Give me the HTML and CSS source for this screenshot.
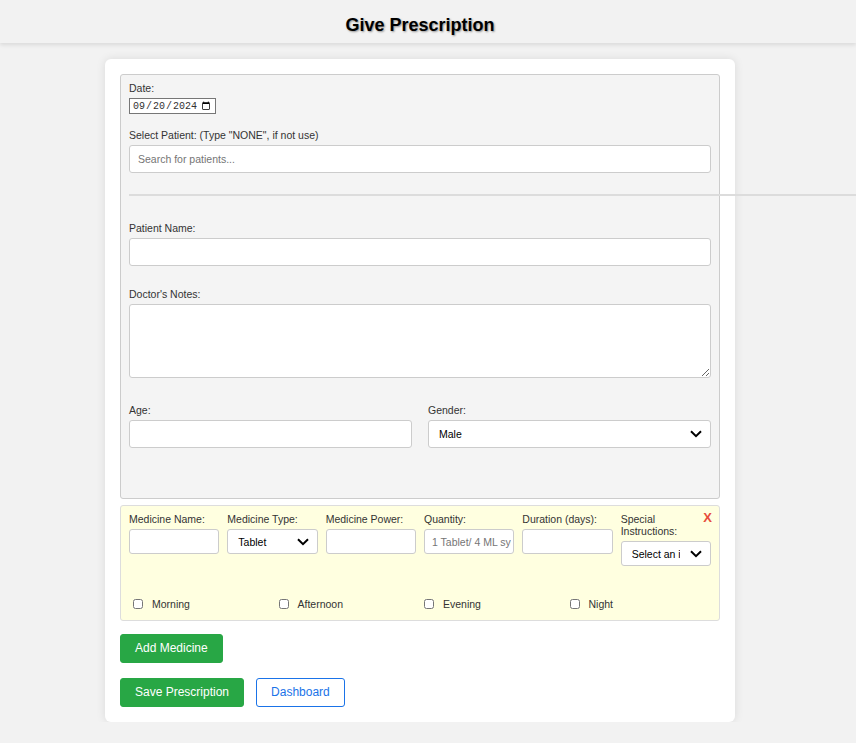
FILE: index.html
```html
<!DOCTYPE html>
<html lang="en">
<head>
<meta charset="utf-8">
<title>Give Prescription</title>
<link rel="stylesheet" href="styles.css">
</head>
<body>
<header class="topbar">
  <h1 class="title">Give Prescription</h1>
</header>
<div class="page">
  <form class="card">
    <div class="patient-box">
      <div class="field">
        <label class="lbl" for="date">Date:</label>
        <input class="date-input" id="date" type="date" value="2024-09-20">
      </div>
      <div class="field field-search">
        <label class="lbl" for="search">Select Patient: (Type "NONE", if not use)</label>
        <input class="text-input" id="search" type="text" placeholder="Search for patients...">
      </div>
      <hr class="divider">
      <div class="field field-wide">
        <label class="lbl" for="pname">Patient Name:</label>
        <input class="text-input" id="pname" type="text">
      </div>
      <div class="field field-notes">
        <label class="lbl" for="notes">Doctor's Notes:</label>
        <textarea class="text-area" id="notes"></textarea>
      </div>
      <div class="two-col">
        <div class="col">
          <label class="lbl" for="age">Age:</label>
          <input class="text-input" id="age" type="text">
        </div>
        <div class="col">
          <label class="lbl" for="gender">Gender:</label>
          <select class="text-input select-input" id="gender">
            <option>Male</option>
            <option>Female</option>
          </select>
        </div>
      </div>
    </div>

    <div class="med-box">
      <span class="remove">X</span>
      <div class="med-row">
        <div class="med-col">
          <label class="lbl">Medicine Name:</label>
          <input class="med-input" type="text">
        </div>
        <div class="med-col">
          <label class="lbl">Medicine Type:</label>
          <select class="med-input select-input">
            <option>Tablet</option>
            <option>Syrup</option>
          </select>
        </div>
        <div class="med-col">
          <label class="lbl">Medicine Power:</label>
          <input class="med-input" type="text">
        </div>
        <div class="med-col">
          <label class="lbl">Quantity:</label>
          <input class="med-input qty-input" type="text" placeholder="1 Tablet/ 4 ML syrup">
        </div>
        <div class="med-col">
          <label class="lbl">Duration (days):</label>
          <input class="med-input" type="text">
        </div>
        <div class="med-col">
          <label class="lbl">Special Instructions:</label>
          <select class="med-input select-input">
            <option>Select an instruction</option>
          </select>
        </div>
      </div>
      <div class="checks">
        <label class="check"><input type="checkbox">Morning</label>
        <label class="check"><input type="checkbox">Afternoon</label>
        <label class="check"><input type="checkbox">Evening</label>
        <label class="check"><input type="checkbox">Night</label>
      </div>
    </div>

    <div class="actions">
      <button type="button" class="btn btn-green">Add Medicine</button>
    </div>
    <div class="actions actions-bottom">
      <button type="button" class="btn btn-green">Save Prescription</button>
      <button type="button" class="btn btn-outline">Dashboard</button>
    </div>
  </form>
</div>
</body>
</html>
```

FILE: styles.css
```css
* {
  box-sizing: border-box;
}

html,
body {
  margin: 0;
  padding: 0;
}

body {
  background: #f2f2f2;
  font-family: "Liberation Sans", Arial, sans-serif;
  color: #333;
  overflow: hidden;
}

.topbar {
  background: #f2f2f2;
  box-shadow: 0 2px 4px rgba(0, 0, 0, 0.1);
  padding: 15px 0 7px;
}

.title {
  width: 840px;
  margin: 0;
  text-align: center;
  font-size: 18px;
  line-height: 21px;
  font-weight: bold;
  color: #000;
  text-shadow: 1px 1px 2px rgba(0, 0, 0, 0.4);
}

.page {
  width: 840px;
}

.card {
  width: 630px;
  margin: 16px auto 0;
  background: #fff;
  border-radius: 6px;
  box-shadow: 0 0 10px rgba(0, 0, 0, 0.1);
  padding: 15px;
}

.patient-box {
  background: #f4f4f4;
  border: 1px solid #ccc;
  border-radius: 3px;
  padding: 7px 8px 8px;
  margin-bottom: 6px;
}

.field {
  margin-bottom: 15px;
}

.field-search {
  margin-bottom: 14px;
}

.field-wide {
  margin-bottom: 22px;
}

.field-notes {
  margin-bottom: 26px;
}

.lbl {
  display: block;
  font-size: 10.5px;
  line-height: 12px;
  margin-bottom: 4px;
  color: #333;
}

.date-input {
  display: block;
  width: 87px;
  height: 16px;
  padding: 0 2px;
  border: 1px solid #767676;
  border-radius: 0;
  background: #fff;
  font: 10px "Liberation Mono", monospace;
  color: #333;
}

.text-input {
  display: block;
  width: 100%;
  height: 28px;
  border: 1px solid #ccc;
  border-radius: 3px;
  background-color: #fff;
  font: 10.5px "Liberation Sans", Arial, sans-serif;
  color: #000;
  padding: 0 8px;
  margin: 0;
}

.text-input::placeholder,
.med-input::placeholder {
  color: #757575;
}

.divider {
  width: 727px;
  height: 0;
  margin: 21px 0 26px;
  border: 0;
  border-top: 2px solid #dcdcdc;
}

.text-area {
  display: block;
  width: 100%;
  height: 74px;
  border: 1px solid #ccc;
  border-radius: 3px;
  background: #fff;
  margin: 0;
  padding: 6px 8px;
  font: 10.5px "Liberation Sans", Arial, sans-serif;
  resize: vertical;
}

.two-col {
  display: grid;
  grid-template-columns: 1fr 1fr;
  column-gap: 16px;
  margin-bottom: 42px;
}

.med-box {
  position: relative;
  background: #ffffe0;
  border: 1px solid #ddd;
  border-radius: 3px;
  padding: 7px 8px 8px;
}

.remove {
  position: absolute;
  top: 4px;
  right: 7px;
  font-size: 13px;
  line-height: 16px;
  font-weight: bold;
  color: #e74c3c;
}

.med-row {
  display: flex;
  gap: 8px;
  align-items: flex-start;
}

.med-col {
  flex: 1 1 0;
  min-width: 0;
}

.med-input {
  display: block;
  width: 100%;
  height: 25px;
  border: 1px solid #ccc;
  border-radius: 3px;
  background-color: #fff;
  font: 10.5px "Liberation Sans", Arial, sans-serif;
  color: #000;
  padding: 0 7px;
  margin: 0;
}

.qty-input {
  padding: 0 2px 0 7px;
}

.select-input {
  -webkit-appearance: none;
  appearance: none;
  padding: 0 30px 0 10px;
  background-color: #fff;
  background-image: url("data:image/svg+xml;utf8,<svg xmlns='http://www.w3.org/2000/svg' width='12' height='8' viewBox='0 0 12 8'><path d='M1 1.2 L6 6.2 L11 1.2' fill='none' stroke='black' stroke-width='2'/></svg>");
  background-repeat: no-repeat;
  background-position: right 8px center;
  background-size: 12px 8px;
  color: #000;
}

.checks {
  display: grid;
  grid-template-columns: repeat(4, 1fr);
  margin-top: 30px;
  height: 16px;
}

.check {
  display: flex;
  align-items: center;
  font-size: 10.5px;
  color: #333;
}

.check input {
  width: 10px;
  height: 10px;
  margin: 0 9px 0 4px;
}

.actions {
  margin-top: 13px;
  display: flex;
  gap: 12px;
}

.actions-bottom {
  margin-top: 15px;
}

.btn {
  font: 12px/13px "Liberation Sans", Arial, sans-serif;
  padding: 7px 14px;
  border: 1px solid;
  border-radius: 3px;
  cursor: pointer;
}

.btn-green {
  background: #28a745;
  border-color: #28a745;
  color: #fff;
}

.btn-outline {
  background: #fff;
  border-color: #1a73e8;
  color: #1a73e8;
}
```
